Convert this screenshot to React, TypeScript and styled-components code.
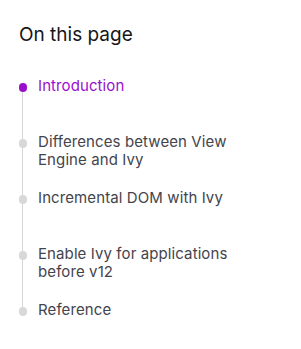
import styled, { createGlobalStyle } from 'styled-components';

const GlobalStyle = createGlobalStyle`
  body {
    margin: 0;
    background: #ffffff;
    font-family: Inter, 'Noto Sans', sans-serif;
  }
`;

const TocWrapper = styled.nav`
  padding: 23px 0 0 0;
`;

const TocTitle = styled.h2`
  margin: 0 0 30px 19px;
  font-size: 19px;
  line-height: 24px;
  font-weight: 400;
  color: #161618;
`;

const TocList = styled.ul`
  list-style: none;
  margin: 0;
  padding: 0;
`;

const TocItem = styled.li<{ $active?: boolean; $last?: boolean }>`
  position: relative;
  height: 56px;
  padding-left: 38px;
  padding-right: 50px;
  font-size: 15px;
  line-height: 18px;
  letter-spacing: 0.1px;
  color: ${(props) => (props.$active ? '#9a0fcc' : '#44444c')};

  &::before {
    content: '';
    display: ${(props) => (props.$last ? 'none' : 'block')};
    position: absolute;
    left: 22px;
    top: 10px;
    width: 1px;
    height: 56px;
    background-color: #d6d6d6;
  }

  &::after {
    content: '';
    position: absolute;
    left: 18.5px;
    top: 6px;
    width: 8.5px;
    height: 8.5px;
    border-radius: 50%;
    background-color: ${(props) => (props.$active ? '#9a0fcc' : '#d8d8d8')};
  }
`;

const items = [
  'Introduction',
  'Differences between View Engine and Ivy',
  'Incremental DOM with Ivy',
  'Enable Ivy for applications before v12',
  'Reference',
];

const App = () => {
  return (
    <>
      <GlobalStyle />
      <TocWrapper>
        <TocTitle>On this page</TocTitle>
        <TocList>
          {items.map((item, index) => (
            <TocItem key={item} $active={index === 0} $last={index === items.length - 1}>
              {item}
            </TocItem>
          ))}
        </TocList>
      </TocWrapper>
    </>
  );
};

export default App;
